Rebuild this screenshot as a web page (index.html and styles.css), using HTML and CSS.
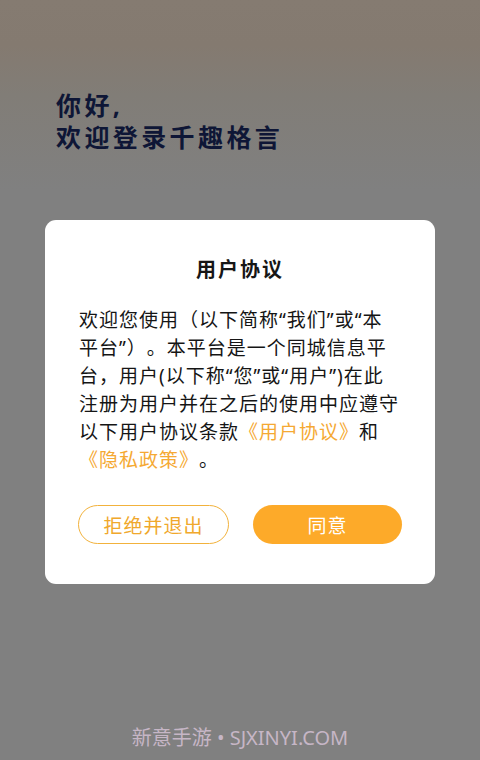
FILE: index.html
```html
<!DOCTYPE html>
<html lang="zh-CN">
<head>
<meta charset="utf-8">
<title>用户协议</title>
<link rel="stylesheet" href="styles.css">
</head>
<body>
<div class="screen">
  <div class="greeting">
    <div>你好,</div>
    <div>欢迎登录千趣格言</div>
  </div>
  <div class="dialog">
    <h2 class="dialog-title">用户协议</h2>
    <p class="dialog-body">欢迎您使用（以下简称“我们”或“本平台”）。本平台是一个同城信息平台，用户(以下称“您”或“用户”)在此注册为用户并在之后的使用中应遵守以下用户协议条款<span class="link">《用户协议》</span>和<span class="link">《隐私政策》</span>。</p>
    <div class="actions">
      <button class="btn btn-outline">拒绝并退出</button>
      <button class="btn btn-fill">同意</button>
    </div>
  </div>
  <div class="watermark">新意手游 • SJXINYI.COM</div>
</div>
</body>
</html>
```

FILE: styles.css
```css
* { box-sizing: border-box; }
html, body {
  margin: 0;
  padding: 0;
}
body {
  width: 480px;
  height: 760px;
  overflow: hidden;
  font-family: "Noto Sans", "Noto Sans CJK SC", sans-serif;
  background: #808080;
  text-spacing-trim: space-all;
}
.screen {
  height: 760px;
  display: flex;
  flex-direction: column;
  background: linear-gradient(#857b71 0px, #847a70 45px, #817d77 95px, #808080 190px, #808080 760px);
}
.greeting {
  padding: 89px 0 0 56px;
  font-size: 25px;
  font-weight: 700;
  line-height: 32px;
  letter-spacing: 3.4px;
  color: #0e1636;
}
.dialog {
  margin: 67px 45px 0 45px;
  background: #ffffff;
  border-radius: 11px;
  padding: 36px 33px 40px 33px;
}
.dialog-title {
  margin: 0;
  text-align: center;
  font-size: 20px;
  line-height: 28px;
  font-weight: 700;
  letter-spacing: 2px;
  color: #161616;
}
.dialog-body {
  margin: 22px 0 0 0;
  padding-left: 1px;
  font-size: 19px;
  font-weight: 400;
  line-height: 28px;
  letter-spacing: 1px;
  color: #151515;
}
.link { color: #f5a933; }
.actions {
  margin-top: 31px;
  display: flex;
  gap: 24px;
}
.btn {
  flex: 1;
  height: 39px;
  border-radius: 20px;
  font-family: "Noto Sans", "Noto Sans CJK SC", sans-serif;
  font-size: 19px;
  font-weight: 400;
  letter-spacing: 1px;
  padding: 0;
  cursor: pointer;
}
.btn-outline {
  background: #ffffff;
  border: 1.5px solid #f2b23c;
  color: #f0a82c;
}
.btn-fill {
  background: #fdaa29;
  border: none;
  color: #ffffff;
}
.watermark {
  margin-top: 142px;
  text-align: center;
  font-size: 20px;
  line-height: 24px;
  color: #c6b6c6;
}
```
